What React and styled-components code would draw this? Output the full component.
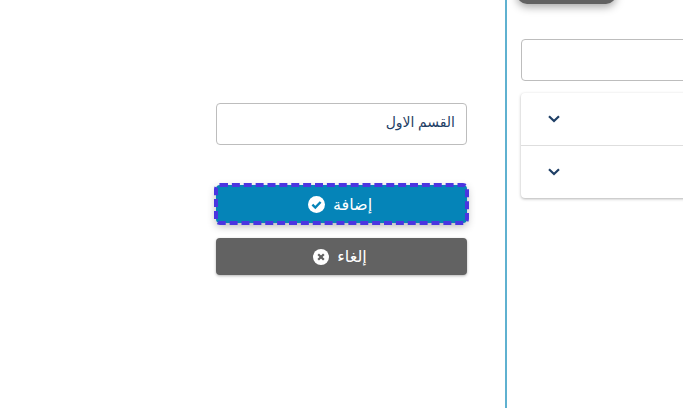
import styled, { createGlobalStyle } from 'styled-components';

const GlobalStyle = createGlobalStyle`
  html, body {
    margin: 0;
    padding: 0;
    background: #fff;
    overflow: hidden;
  }
  * {
    box-sizing: border-box;
  }
`;

const CheckIcon = () => (
  <svg width="17" height="17" viewBox="0 0 17 17">
    <circle cx="8.5" cy="8.5" r="8.5" fill="#fff" />
    <path d="M4.4 8.7 L7.3 11.5 L12.6 6" fill="none" stroke="#0584b8" strokeWidth="2.4" />
  </svg>
);

const CrossIcon = () => (
  <svg width="16" height="16" viewBox="0 0 16 16">
    <circle cx="8" cy="8" r="8" fill="#fff" />
    <path d="M5.2 5.2 L10.8 10.8 M10.8 5.2 L5.2 10.8" fill="none" stroke="#626262" strokeWidth="2.2" />
  </svg>
);

const Chevron = () => (
  <svg width="12" height="8" viewBox="0 0 12 8">
    <path d="M1 1.2 L6 6 L11 1.2" fill="none" stroke="#1f3f66" strokeWidth="2.2" />
  </svg>
);

const App = () => (
  <>
    <GlobalStyle />
    <Page>
      <LeftPane>
        <Form>
          <NameInput dir="rtl" defaultValue="القسم الاول" />
          <AddButton dir="rtl">
            إضافة
            <CheckIcon />
          </AddButton>
          <CancelButton dir="rtl">
            إلغاء
            <CrossIcon />
          </CancelButton>
        </Form>
      </LeftPane>
      <RightPane>
        <ScrolledButton />
        <SearchInput />
        <Accordion>
          <AccordionRow $height={52}>
            <Chevron />
          </AccordionRow>
          <AccordionRow $height={53}>
            <Chevron />
          </AccordionRow>
        </Accordion>
      </RightPane>
    </Page>
  </>
);

export default App;

const Page = styled.div`
  display: flex;
  width: 683px;
  height: 408px;
  overflow: hidden;
`;

const LeftPane = styled.div`
  flex: 0 0 507px;
  height: 100%;
  padding: 103px 0 0 216px;

  border-right: 2px solid #5fb1d0;
`;

const Form = styled.div`
  display: flex;
  flex-direction: column;
  width: 251px;
`;

const NameInput = styled.input`
  width: 100%;
  height: 42px;
  padding: 0 11px 3px;
  margin-bottom: 40px;

  border: 1px solid #bdbdbd;
  border-radius: 4px;
  outline: none;

  color: #1f3f66;
  font-family: "Liberation Serif", "DejaVu Sans", serif;
  font-size: 14px;
`;

const ActionButton = styled.button`
  display: flex;
  justify-content: center;
  align-items: center;
  gap: 8px;

  width: 100%;
  padding: 0 3px 0 0;
  border: none;
  border-radius: 4px;

  color: #fff;
  font-family: "DejaVu Sans", sans-serif;
  font-size: 16px;
`;

const AddButton = styled(ActionButton)`
  height: 38px;
  margin-bottom: 15px;

  background: #0584b8;
  outline: 4px dashed #4b35e0;
  outline-offset: -2px;
  box-shadow: 0 3px 8px rgba(0, 0, 0, 0.3);
`;

const CancelButton = styled(ActionButton)`
  height: 37px;

  background: #626262;
  box-shadow: 0 1px 3px rgba(0, 0, 0, 0.3);
`;

const RightPane = styled.div`
  flex: 1;
  min-width: 0;
  padding-left: 14px;
`;

const ScrolledButton = styled.div`
  width: 99px;
  height: 36px;
  margin: -32px 0 35px -4px;

  border-radius: 10px;
  background: #626262;
  box-shadow: 0 3px 8px rgba(0, 0, 0, 0.35);
`;

const SearchInput = styled.div`
  width: 200px;
  height: 42px;
  margin-bottom: 12px;

  border: 1px solid #bdbdbd;
  border-radius: 4px;
`;

const Accordion = styled.div`
  width: 200px;

  border-radius: 4px;
  background: #fff;
  box-shadow: 0 1px 3px rgba(0, 0, 0, 0.3);
`;

const AccordionRow = styled.div`
  display: flex;
  align-items: center;
  height: ${({ $height }) => $height}px;
  padding: 0 0 1px 27px;

  & + & {
    border-top: 1px solid #dedede;
  }
`;
